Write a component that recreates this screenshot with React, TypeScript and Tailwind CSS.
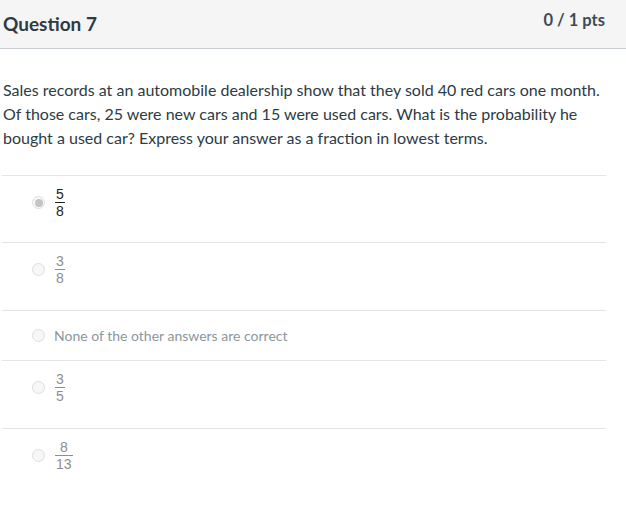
import React from "react";

function Radio({ selected }: { selected?: boolean }) {
  return (
    <span className="flex h-[13px] w-[13px] shrink-0 items-center justify-center rounded-full border border-[#dedede] bg-[#f7f7f7]">
      {selected ? <span className="h-[8px] w-[8px] rounded-full bg-[#c4c4c4]" /> : null}
    </span>
  );
}

function Frac({ n, d, dark }: { n: string; d: string; dark?: boolean }) {
  const color = dark ? "text-[#222]" : "text-[#8e8e8e]";
  const bar = dark ? "bg-[#222]" : "bg-[#8e8e8e]";
  return (
    <span className={`inline-flex flex-col items-center font-['Liberation_Sans',sans-serif] text-[14px] leading-[14px] ${color}`}>
      <span className="px-[1px]">{n}</span>
      <span className={`my-[1px] h-[1px] w-full ${bar}`} />
      <span className="px-[1px]">{d}</span>
    </span>
  );
}

function FracRow({ n, d, selected, h }: { n: string; d: string; selected?: boolean; h: string }) {
  return (
    <div className={`flex ${h} items-start border-t border-[#e4e4e4] pl-[30px] pt-[10px]`}>
      <div className="flex h-[33px] items-center gap-[10px]">
        <Radio selected={selected} />
        <Frac n={n} d={d} dark={selected} />
      </div>
    </div>
  );
}

export default function App() {
  return (
    <div className="min-h-[513px] w-[626px] bg-white font-['Lato',sans-serif] text-[#2d3b45]">
      <div className="flex h-[49px] justify-between border-b border-[#c7cdd1] bg-[#f5f5f5] pl-[3px] pr-[21px]">
        <div className="pt-[12px] text-[19px] font-bold leading-[24px]">Question 7</div>
        <div className="pt-[9px] text-[16.5px] font-bold leading-[22px] text-[#3d4b55]">0 / 1 pts</div>
      </div>
      <div className="w-[612px] px-[3px] pb-[25px] pt-[29px] text-[16px] leading-[24px]">
        Sales records at an automobile dealership show that they sold 40 red cars one month.
        Of those cars, 25 were new cars and 15 were used cars. What is the probability he
        bought a used car? Express your answer as a fraction in lowest terms.
      </div>
      <div className="mx-[2px] w-[604px]">
        <FracRow n="5" d="8" selected h="h-[67px]" />
        <FracRow n="3" d="8" h="h-[68px]" />
        <div className="flex h-[50px] items-center gap-[9px] border-t border-[#e4e4e4] pl-[30px]">
          <Radio />
          <span className="text-[14px] leading-[18px] text-[#8b969e]">None of the other answers are correct</span>
        </div>
        <FracRow n="3" d="5" h="h-[68px]" />
        <FracRow n="8" d="13" h="h-[68px]" />
      </div>
    </div>
  );
}
